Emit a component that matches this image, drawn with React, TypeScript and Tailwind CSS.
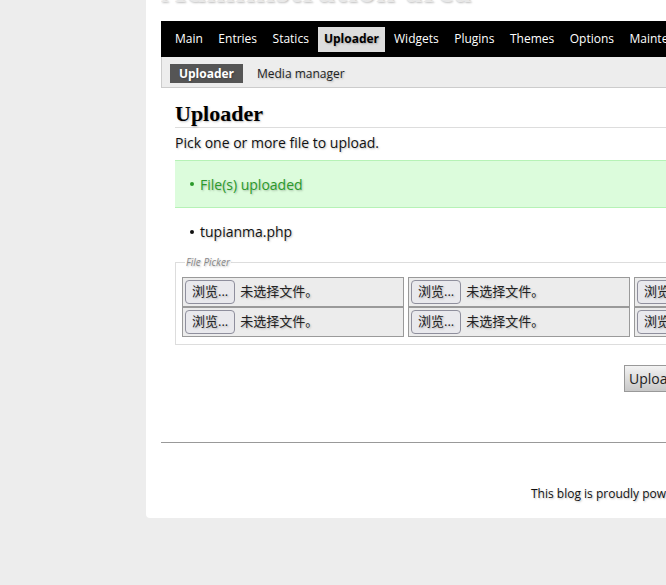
const tabs = ["Main", "Entries", "Statics", "Uploader", "Widgets", "Plugins", "Themes", "Options", "Maintenance"];

const FileCell = () => (
  <div className="flex items-center h-[30px] w-[222px] shrink-0 border border-[#9a9a9a] bg-[#ececec] px-[2px]">
    <span className="h-[24px] px-[6px] flex items-center rounded-[4px] border border-[#8f8f9d] bg-[#e9e9ed] text-[13px] text-[#222]">浏览...</span>
    <span className="ml-[5px] text-[13px] text-[#222]">未选择文件。</span>
  </div>
);

const Dot = ({ color }: { color: string }) => (
  <span className="w-[4px] h-[4px] rounded-full mr-[6px] shrink-0" style={{ background: color }} />
);

const App = () => {
  return (
    <div
      className="w-[666px] h-[585px] overflow-hidden bg-[#ededed] text-[#111] [text-shadow:1px_1px_2px_rgba(0,0,0,0.25)]"
      style={{ fontFamily: '"Open Sans", "Noto Sans CJK SC", sans-serif' }}
    >
      <div className="ml-[146px] w-[760px] h-[518px] bg-white rounded-bl-[4px] pl-[15px]">
        {/* site title, mostly scrolled off */}
        <div className="h-[21px] overflow-hidden flex flex-col justify-end">
          <div
            className="mb-[13px] text-[34px] leading-none font-bold text-[#e8e8e8] tracking-wide whitespace-nowrap"
            style={{ fontFamily: '"Liberation Serif", serif' }}
          >
            Administration area
          </div>
        </div>

        <div className="h-[36px] bg-black flex items-center pl-[8px] gap-[3.5px] text-[12px] text-white whitespace-nowrap">
          {tabs.map((t) =>
            t === "Uploader" ? (
              <span key={t} className="h-[25px] flex items-center px-[5.5px] bg-[#dddddd] text-black font-bold">
                {t}
              </span>
            ) : (
              <span key={t} className="px-[6px]">
                {t}
              </span>
            )
          )}
        </div>

        <div className="h-[31px] bg-[#ededed] border-b border-l border-[#cccccc] flex items-center pl-[8px] text-[12px]">
          <span className="mt-[3px] h-[19px] w-[73px] flex items-center justify-center bg-[#555555] text-white font-bold">Uploader</span>
          <span className="mt-[3px] ml-[14px] text-[#222]">Media manager</span>
        </div>

        <div className="pl-[14px]">
          <h2
            className="mt-[14px] text-[22px] leading-[24px] font-bold text-black border-b border-[#dddddd] pb-[1px]"
            style={{ fontFamily: '"Liberation Serif", serif' }}
          >
            Uploader
          </h2>
          <p className="mt-[5px] text-[14px] leading-[19px]">Pick one or more file to upload.</p>

          <div className="mt-[8px] h-[48px] bg-[#dcfcdc] border-y border-[#b6f2b6] flex items-center pl-[15px] text-[14px] text-[#2b9a2b]">
            <Dot color="#2b9a2b" />
            File(s) uploaded
          </div>

          <div className="mt-[13px] flex items-center pl-[15px] text-[14px]">
            <Dot color="#111" />
            tupianma.php
          </div>

          <fieldset className="mt-[13px] border border-[#dddddd] px-[6px] pb-[7px] pt-[7px]">
            <legend className="ml-[3px] px-[1px] text-[10px] italic text-[#888]">File Picker</legend>
            <div className="flex gap-[4px]">
              <FileCell />
              <FileCell />
              <FileCell />
            </div>
            <div className="flex gap-[4px]">
              <FileCell />
              <FileCell />
              <FileCell />
            </div>
          </fieldset>

          <div className="mt-[20px] pl-[449px]">
            <button className="h-[27px] px-[4px] border border-[#999] bg-gradient-to-b from-[#f3f3f3] to-[#c8c8c8] text-[14px] text-[#222]">
              Upload files
            </button>
          </div>
        </div>

        <div className="mt-[50px] border-t border-[#999]" />

        <p className="mt-[43px] pl-[370px] text-[12px] leading-[16px] text-[#111]">
          This blog is proudly powered by Dotclear
        </p>
      </div>
    </div>
  );
};

export default App;
